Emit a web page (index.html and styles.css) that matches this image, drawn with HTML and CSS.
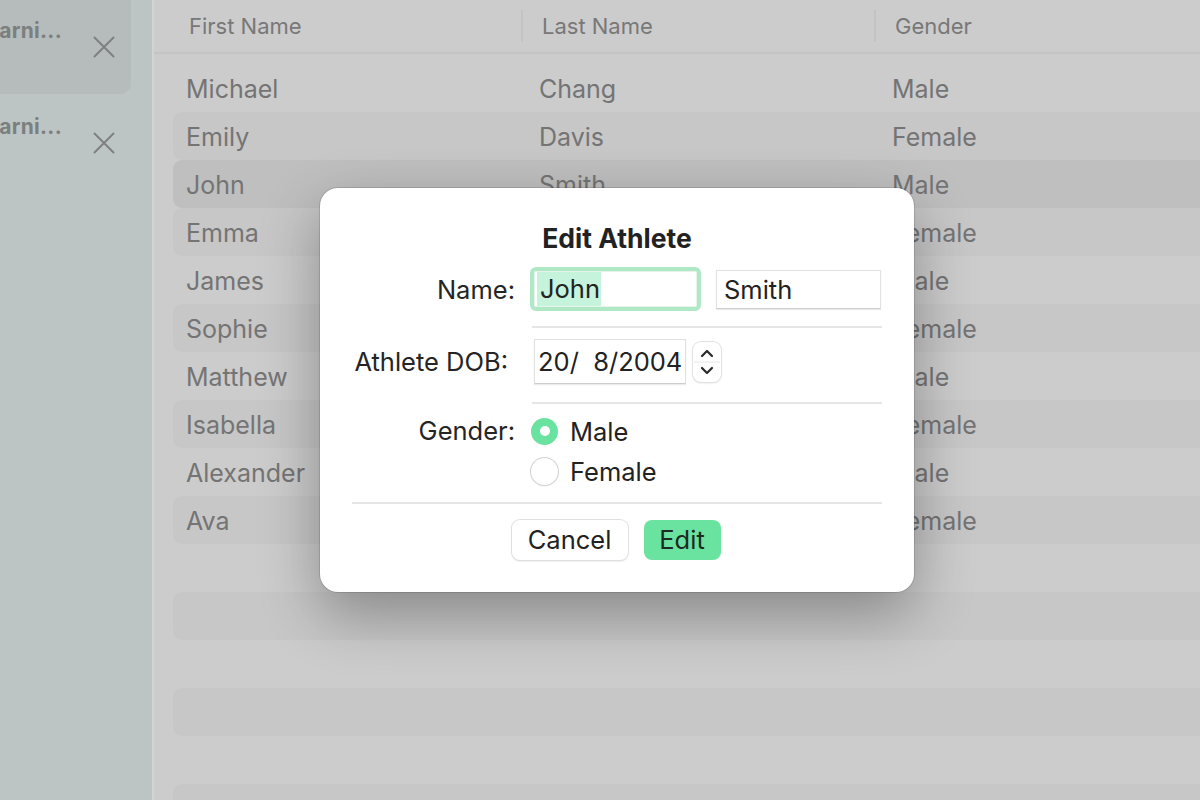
FILE: index.html
```html
<!DOCTYPE html>
<html lang="en">
<head>
<meta charset="utf-8">
<title>Edit Athlete</title>
<link rel="stylesheet" href="styles.css">
</head>
<body>
<div class="app">
  <aside class="sidebar">
    <div class="side-item active">
      <span class="side-title">Learni...</span>
      <svg class="close" width="22" height="22" viewBox="0 0 22 22"><path d="M1.5 1.5 L20.5 20.5 M20.5 1.5 L1.5 20.5" stroke="#7d8281" stroke-width="2" fill="none" stroke-linecap="round"/></svg>
    </div>
    <div class="side-item">
      <span class="side-title">Learni...</span>
      <svg class="close" width="22" height="22" viewBox="0 0 22 22"><path d="M1.5 1.5 L20.5 20.5 M20.5 1.5 L1.5 20.5" stroke="#7d8281" stroke-width="2" fill="none" stroke-linecap="round"/></svg>
    </div>
  </aside>
  <main class="main">
    <div class="table-head">
      <div class="th">First Name</div>
      <div class="th sep">Last Name</div>
      <div class="th sep">Gender</div>
    </div>
    <div class="rows">
      <div class="row"><span>Michael</span><span>Chang</span><span>Male</span></div>
      <div class="row striped"><span>Emily</span><span>Davis</span><span>Female</span></div>
      <div class="row selected"><span>John</span><span>Smith</span><span>Male</span></div>
      <div class="row striped"><span>Emma</span><span>Johnson</span><span>Female</span></div>
      <div class="row"><span>James</span><span>Brown</span><span>Male</span></div>
      <div class="row striped"><span>Sophie</span><span>Wilson</span><span>Female</span></div>
      <div class="row"><span>Matthew</span><span>Taylor</span><span>Male</span></div>
      <div class="row striped"><span>Isabella</span><span>Martinez</span><span>Female</span></div>
      <div class="row"><span>Alexander</span><span>Lee</span><span>Male</span></div>
      <div class="row striped"><span>Ava</span><span>Thompson</span><span>Female</span></div>
      <div class="row"></div>
      <div class="row striped"></div>
      <div class="row"></div>
      <div class="row striped"></div>
      <div class="row"></div>
      <div class="row striped"></div>
    </div>
  </main>

  <div class="dialog">
    <div class="dialog-title">Edit Athlete</div>
    <div class="form-row name-row">
      <label class="label">Name:</label>
      <div class="controls">
        <div class="field focus"><span class="sel">John</span></div>
        <div class="field plain">Smith</div>
      </div>
    </div>
    <div class="divider short"></div>
    <div class="form-row dob-row">
      <label class="label">Athlete DOB:</label>
      <div class="controls">
        <div class="date-field">20/  8/2004</div>
        <div class="stepper">
          <svg width="28" height="40" viewBox="0 0 28 40">
            <path d="M9 14 L14 9 L19 14" stroke="#2a2a2a" stroke-width="2.2" fill="none" stroke-linecap="round" stroke-linejoin="round"/>
            <line x1="1" y1="20" x2="27" y2="20" stroke="#e4e4e4" stroke-width="1"/>
            <path d="M9 26 L14 31 L19 26" stroke="#2a2a2a" stroke-width="2.2" fill="none" stroke-linecap="round" stroke-linejoin="round"/>
          </svg>
        </div>
      </div>
    </div>
    <div class="divider short"></div>
    <div class="form-row gender-row">
      <label class="label">Gender:</label>
      <div class="radios">
        <div class="radio-opt"><span class="radio on"></span><span>Male</span></div>
        <div class="radio-opt"><span class="radio"></span><span>Female</span></div>
      </div>
    </div>
    <div class="divider full"></div>
    <div class="buttons">
      <button class="btn cancel">Cancel</button>
      <button class="btn primary">Edit</button>
    </div>
  </div>
</div>
</body>
</html>
```

FILE: styles.css
```css
* { box-sizing: border-box; }
html, body { margin: 0; padding: 0; }
body {
  width: 1200px;
  height: 800px;
  overflow: hidden;
  font-family: Inter, "Noto Sans", "Liberation Sans", sans-serif;
  background: #cccccc;
}
.app {
  position: relative;
  display: flex;
  width: 1200px;
  height: 800px;
}

/* Sidebar */
.sidebar {
  width: 154px;
  flex: none;
  background: #bdc5c4;
  border-right: 2px solid #d2d5d5;
  overflow: hidden;
}
.side-item {
  position: relative;
  width: 131px;
  height: 94px;
  border-radius: 0 0 10px 0;
  display: flex;
  align-items: flex-start;
  justify-content: space-between;
  padding: 18px 16px 0 0;
  overflow: hidden;
}
.side-item + .side-item { height: 80px; padding-top: 20px; }
.side-item.active { background: #b5bcbb; }
.side-title {
  font-weight: 700;
  font-size: 21px;
  color: #7b7f7f;
  margin-left: -26px;
  white-space: nowrap;
  line-height: 26px;
  letter-spacing: 0.3px;
}
.close { margin-top: 18px; }
.side-item + .side-item .close { margin-top: 18px; }

/* Main table */
.main {
  flex: 1;
  padding-left: 14px;
  overflow: hidden;
}
.table-head {
  display: flex;
  height: 54px;
  border-bottom: 2px solid #c4c4c4;
  align-items: center;
  margin-left: -14px;
  padding-left: 14px;
}
.th {
  width: 353px;
  flex: none;
  padding-left: 21px;
  font-size: 22px;
  color: #787878;
  height: 32px;
  line-height: 32px;
}
.th.sep { border-left: 2px solid #c3c3c3; padding-left: 19px; }
.rows { padding-top: 10px; }
.row {
  display: flex;
  height: 48px;
  align-items: center;
  margin-left: 5px;
  border-radius: 9px 0 0 9px;
  font-size: 25px;
  color: #747474;
  padding-top: 1px;
}
.row span { width: 353px; flex: none; padding-left: 18px; }
.row span:first-child { width: 348px; padding-left: 13px; }
.row.striped { background: #c7c7c7; }
.row.selected { background: #bfbfbf; }

/* Dialog */
.dialog {
  position: absolute;
  left: 320px;
  top: 188px;
  width: 594px;
  height: 404px;
  background: #ffffff;
  border-radius: 18px;
  box-shadow: 0 0 0 1px rgba(0,0,0,0.12), 0 22px 60px rgba(0,0,0,0.32);
  padding: 34px 32px 0 32px;
  display: flex;
  flex-direction: column;
  color: #222222;
}
.dialog-title {
  text-align: center;
  font-weight: 700;
  font-size: 26.5px;
  line-height: 30px;
  height: 30px;
  margin-bottom: 15px;
  padding-top: 1px;
}
.form-row {
  display: flex;
  align-items: center;
}
.label {
  width: 163px;
  flex: none;
  text-align: right;
  font-size: 25.5px;
  margin-right: 15px;
  color: #252525;
}
.controls { display: flex; align-items: center; }
.name-row { height: 44px; }
.field {
  font-size: 25.5px;
  display: flex;
  align-items: center;
}
.field.focus {
  width: 171px;
  height: 44px;
  border: 4px solid #aee8c4;
  border-radius: 6px;
  background: #fff;
  padding-left: 3px;
  box-shadow: inset 0 0 0 1px #e6f3ea;
}
.sel {
  background: #c5f3dc;
  height: 34px;
  line-height: 34px;
  padding: 0 1px 0 3px;
}
.field.plain {
  margin-left: 15px;
  width: 165px;
  height: 39px;
  border: 1px solid #e2e2e2;
  border-bottom-color: #cfcfcf;
  box-shadow: 0 1px 1px rgba(0,0,0,0.08);
  padding-left: 7px;
}
.divider { height: 2px; background: #e6e6e6; }
.divider.short { margin-left: 180px; }
.name-row + .divider { margin-top: 15px; }
.dob-row { margin-top: 11px; height: 45px; }
.dob-row .label { margin-right: 19px; padding-right: 7px; }
.date-field {
  width: 152px;
  height: 45px;
  border: 1px solid #e0e0e0;
  border-bottom-color: #cdcdcd;
  box-shadow: 0 1px 1px rgba(0,0,0,0.08);
  font-size: 25.5px;
  white-space: pre;
  display: flex;
  align-items: center;
  padding-left: 3px;
}
.stepper {
  margin-left: 7px;
  width: 28px;
  height: 40px;
  border-radius: 8px;
  background: #fff;
  box-shadow: 0 0 0 1px #e2e2e2, 0 1px 2px rgba(0,0,0,0.18);
  display: flex;
}
.dob-row + .divider { margin-top: 18px; }
.gender-row { margin-top: 12px; align-items: flex-start; }
.gender-row .label { line-height: 30px; }
.radios { display: flex; flex-direction: column; gap: 10px; margin-left: 1px; }
.radio-opt {
  display: flex;
  align-items: center;
  height: 30px;
  font-size: 25.5px;
  gap: 12px;
}
.radio {
  width: 27px;
  height: 27px;
  border-radius: 50%;
  background: #fff;
  box-shadow: 0 0 0 1px #d2d2d2, 0 1px 2px rgba(0,0,0,0.12);
  display: flex;
  align-items: center;
  justify-content: center;
}
.radio.on { background: #6ae3a1; box-shadow: none; }
.radio.on::after {
  content: "";
  width: 10px;
  height: 10px;
  border-radius: 50%;
  background: #fff;
}
.divider.full { margin-top: 16px; }
.buttons {
  margin-top: 16px;
  display: flex;
  justify-content: center;
  gap: 16px;
  padding-right: 2px;
}
.btn {
  font-family: inherit;
  font-size: 25.5px;
  height: 40px;
  border-radius: 8px;
  border: none;
  color: #222;
  padding: 0 0 2px 0;
}
.btn.cancel {
  width: 116px;
  background: #fff;
  box-shadow: 0 0 0 1px #e0e0e0, 0 1px 2px rgba(0,0,0,0.2);
}
.btn.primary {
  width: 77px;
  background: #6ae3a1;
  color: #1c2a22;
}
```
